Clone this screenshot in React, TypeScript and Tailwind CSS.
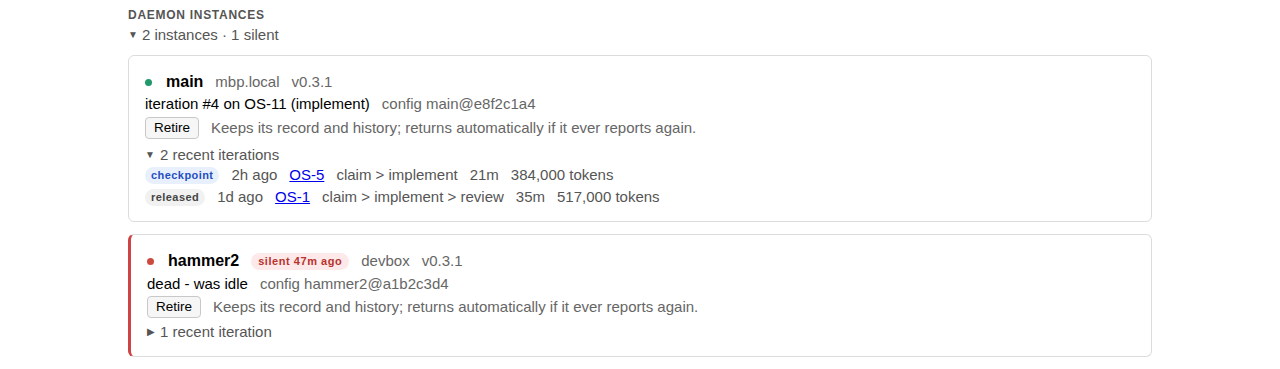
type Iteration = {
  outcome: 'checkpoint' | 'released'
  ago: string
  issue: string
  path: string
  duration: string
  tokens: string
}

type Instance = {
  name: string
  host: string
  version: string
  silent?: string
  status: string
  config: string
  iterations: Iteration[]
  open: boolean
}

const instances: Instance[] = [
  {
    name: 'main',
    host: 'mbp.local',
    version: 'v0.3.1',
    status: 'iteration #4 on OS-11 (implement)',
    config: 'config main@e8f2c1a4',
    open: true,
    iterations: [
      { outcome: 'checkpoint', ago: '2h ago', issue: 'OS-5', path: 'claim > implement', duration: '21m', tokens: '384,000 tokens' },
      { outcome: 'released', ago: '1d ago', issue: 'OS-1', path: 'claim > implement > review', duration: '35m', tokens: '517,000 tokens' },
    ],
  },
  {
    name: 'hammer2',
    host: 'devbox',
    version: 'v0.3.1',
    silent: 'silent 47m ago',
    status: 'dead - was idle',
    config: 'config hammer2@a1b2c3d4',
    open: false,
    iterations: [
      { outcome: 'released', ago: '3d ago', issue: 'OS-2', path: 'claim > implement', duration: '12m', tokens: '90,000 tokens' },
    ],
  },
]

function Badge({ outcome }: { outcome: Iteration['outcome'] }) {
  if (outcome === 'checkpoint') {
    return (
      <span className="rounded-full bg-[#e9f0fd] px-[6px] text-[11px] font-bold leading-[17px] tracking-[0.04em] text-[#1f4fbf]">
        checkpoint
      </span>
    )
  }
  return (
    <span className="rounded-full bg-[#f1f1f1] px-[6px] text-[11px] font-bold leading-[17px] tracking-[0.04em] text-[#444]">
      released
    </span>
  )
}

function InstanceCard({ inst }: { inst: Instance }) {
  const silent = !!inst.silent
  return (
    <div
      className={
        silent
          ? 'rounded-md border border-[#dcdcdc] border-l-[3px] border-l-[#cc4444] px-4 pt-4 pb-[14px]'
          : 'rounded-md border border-[#dcdcdc] px-4 pt-4 pb-[14px]'
      }
    >
      <div className="flex items-center gap-3 leading-5">
        <span className={silent ? 'h-[7px] w-[7px] rounded-full bg-[#cc4a3d]' : 'h-[7px] w-[7px] rounded-full bg-[#22996b]'} />
        <span className="ml-[2px] text-[16px] font-bold text-black">{inst.name}</span>
        {inst.silent && (
          <span className="rounded-full bg-[#fde9e9] px-[7px] text-[11px] font-bold leading-[17px] tracking-[0.05em] text-[#b8322e]">
            {inst.silent}
          </span>
        )}
        <span className="text-[15px] text-[#666]">{inst.host}</span>
        <span className="text-[15px] text-[#666]">{inst.version}</span>
      </div>
      <div className={silent ? 'mt-[3px] flex gap-3 text-[15px] leading-5' : 'mt-0.5 flex gap-3 text-[15px] leading-5'}>
        <span className="text-black">{inst.status}</span>
        <span className="text-[#666]">{inst.config}</span>
      </div>
      <div className={silent ? 'mt-[2px] flex items-center gap-3' : 'mt-[3px] flex items-center gap-3'}>
        <button className="h-[22px] rounded-[4px] border border-[#c8c8c8] bg-[#f6f6f6] px-[8px] text-[13.5px] leading-none text-black">
          Retire
        </button>
        <span className="text-[15px] leading-5 text-[#666]">
          Keeps its record and history; returns automatically if it ever reports again.
        </span>
      </div>
      <div
        className={
          silent
            ? 'mt-[4px] flex items-center gap-[5px] text-[15px] leading-5 text-[#555]'
            : 'mt-[6px] flex items-center gap-[5px] text-[15px] leading-5 text-[#555]'
        }
      >
        <span className="text-[10px]">{inst.open ? '▼' : '▶'}</span>
        <span>
          {inst.iterations.length} recent {inst.iterations.length === 1 ? 'iteration' : 'iterations'}
        </span>
      </div>
      {inst.open && (
        <div className="flex flex-col gap-0.5">
          {inst.iterations.map((it) => (
            <div key={it.issue} className="flex items-center gap-3 text-[15px] leading-5 text-[#555]">
              <Badge outcome={it.outcome} />
              <span>{it.ago}</span>
              <a href="#" className="text-[#0000ee] underline">
                {it.issue}
              </a>
              <span>{it.path}</span>
              <span>{it.duration}</span>
              <span>{it.tokens}</span>
            </div>
          ))}
        </div>
      )}
    </div>
  )
}

export default function App() {
  return (
    <div className="min-h-screen bg-white font-['Liberation_Sans',Arial,sans-serif]">
      <div className="mx-auto w-[1024px] pt-[7px]">
        <div className="text-[12px] font-bold uppercase leading-4 tracking-[0.06em] text-[#555]">
          Daemon instances
        </div>
        <div className="mt-0.5 flex items-center gap-[4px] text-[15px] leading-5 text-[#555]">
          <span className="text-[10px]">▼</span>
          <span>2 instances · 1 silent</span>
        </div>
        <div className="mt-[10px] flex flex-col gap-3">
          {instances.map((inst) => (
            <InstanceCard key={inst.name} inst={inst} />
          ))}
        </div>
      </div>
    </div>
  )
}
